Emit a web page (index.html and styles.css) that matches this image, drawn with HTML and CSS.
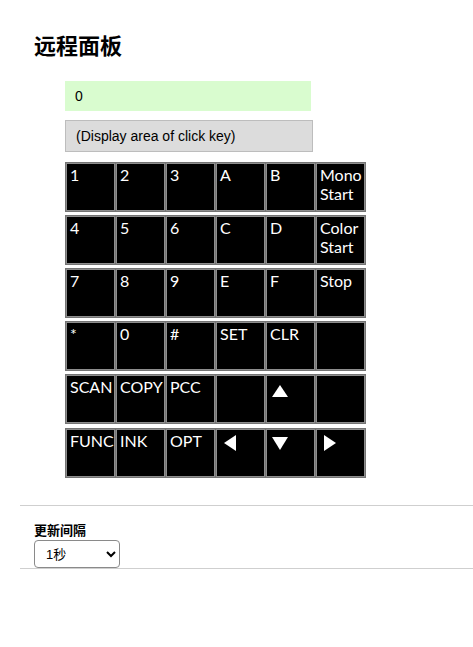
FILE: index.html
```html
<!DOCTYPE html>
<html lang="zh">
<head>
<meta charset="utf-8">
<title>远程面板</title>
<link rel="stylesheet" href="styles.css">
</head>
<body>
<div class="page">
  <h1 class="title">远程面板</h1>
  <div class="remote">
    <div class="lcd">0</div>
    <div class="keylog">(Display area of click key)</div>
    <div class="keypad">
      <div class="row">
        <div class="key">1</div><div class="key">2</div><div class="key">3</div>
        <div class="key">A</div><div class="key">B</div><div class="key">Mono Start</div>
      </div>
      <div class="row">
        <div class="key">4</div><div class="key">5</div><div class="key">6</div>
        <div class="key">C</div><div class="key">D</div><div class="key">Color Start</div>
      </div>
      <div class="row">
        <div class="key">7</div><div class="key">8</div><div class="key">9</div>
        <div class="key">E</div><div class="key">F</div><div class="key">Stop</div>
      </div>
      <div class="row">
        <div class="key">*</div><div class="key">0</div><div class="key">#</div>
        <div class="key">SET</div><div class="key">CLR</div><div class="key"></div>
      </div>
      <div class="row">
        <div class="key">SCAN</div><div class="key">COPY</div><div class="key">PCC</div>
        <div class="key"></div>
        <div class="key"><svg class="arrow arrow-up" width="16" height="12" viewBox="0 0 16 12"><polygon points="8,0 16,12 0,12" fill="#fff"/></svg></div>
        <div class="key"></div>
      </div>
      <div class="row row-last">
        <div class="key">FUNC</div><div class="key">INK</div><div class="key">OPT</div>
        <div class="key"><svg class="arrow arrow-side" width="12" height="16" viewBox="0 0 12 16"><polygon points="0,8 12,0 12,16" fill="#fff"/></svg></div>
        <div class="key"><svg class="arrow arrow-down" width="16" height="13" viewBox="0 0 16 13"><polygon points="0,0 16,0 8,13" fill="#fff"/></svg></div>
        <div class="key"><svg class="arrow arrow-side" width="12" height="16" viewBox="0 0 12 16"><polygon points="0,0 12,8 0,16" fill="#fff"/></svg></div>
      </div>
    </div>
  </div>
  <hr class="rule rule-top">
  <div class="interval">
    <label class="interval-label" for="interval">更新间隔</label>
    <select id="interval" class="interval-select">
      <option>1秒</option>
      <option>2秒</option>
      <option>5秒</option>
    </select>
  </div>
  <hr class="rule">
</div>
</body>
</html>
```

FILE: styles.css
```css
html, body {
  margin: 0;
  padding: 0;
  background: #fff;
}

body {
  font-family: "Liberation Sans", Arial, "Noto Sans CJK SC", sans-serif;
  color: #000;
}

.page {
  padding-top: 29px;
}

.title {
  margin: 0 0 0 34px;
  font-family: "Noto Sans CJK SC", sans-serif;
  font-size: 22px;
  line-height: 30px;
  font-weight: 700;
}

.remote {
  margin: 22px 0 0 65px;
  width: 301px;
}

.lcd {
  box-sizing: border-box;
  width: 246px;
  height: 30px;
  background: #d9fccf;
  font-size: 14px;
  line-height: 30px;
  padding-left: 10px;
}

.keylog {
  box-sizing: border-box;
  width: 248px;
  height: 32px;
  margin-top: 9px;
  background: #dcdcdc;
  border: 1px solid #bdbdbd;
  font-size: 14px;
  line-height: 30px;
  padding-left: 10px;
}

.keypad {
  margin-top: 10px;
  display: flex;
  flex-direction: column;
  gap: 3px;
}

.row {
  display: grid;
  grid-template-columns: repeat(6, 1fr);
  gap: 1px;
  padding: 1px;
  background: #747474;
  height: 50px;
  box-sizing: border-box;
}

.row-last {
  margin-top: 1px;
}

.key {
  background: #000;
  border: 1px solid #8e8e8e;
  color: #fff;
  font-family: Lato, "Open Sans", sans-serif;
  font-size: 16px;
  line-height: 19px;
  padding: 1px 0 0 3px;
  overflow: hidden;
  min-width: 0;
}

.arrow {
  display: block;
}

.arrow-up {
  margin: 8px 0 0 2px;
}

.arrow-down {
  margin: 6px 0 0 2px;
}

.arrow-side {
  margin: 4px 0 0 4px;
}

.rule {
  margin: 0 0 0 20px;
  border: 0;
  border-top: 1px solid #cfcfcf;
  height: 0;
}

.rule-top {
  margin-top: 27px;
}

.interval {
  padding: 15px 0 0 34px;
  display: flex;
  flex-direction: column;
  align-items: flex-start;
}

.interval-label {
  font-size: 13px;
  font-weight: 700;
  line-height: 18px;
  font-family: "Noto Sans CJK SC", sans-serif;
}

.interval-select {
  margin-top: 1px;
  width: 86px;
  height: 28px;
  font-family: "Liberation Sans", "Noto Sans CJK SC", sans-serif;
  font-size: 13px;
  padding-left: 7px;
  border: 1px solid #8a8a8a;
  border-radius: 4px;
  background: #fff;
  color: #000;
}
```
